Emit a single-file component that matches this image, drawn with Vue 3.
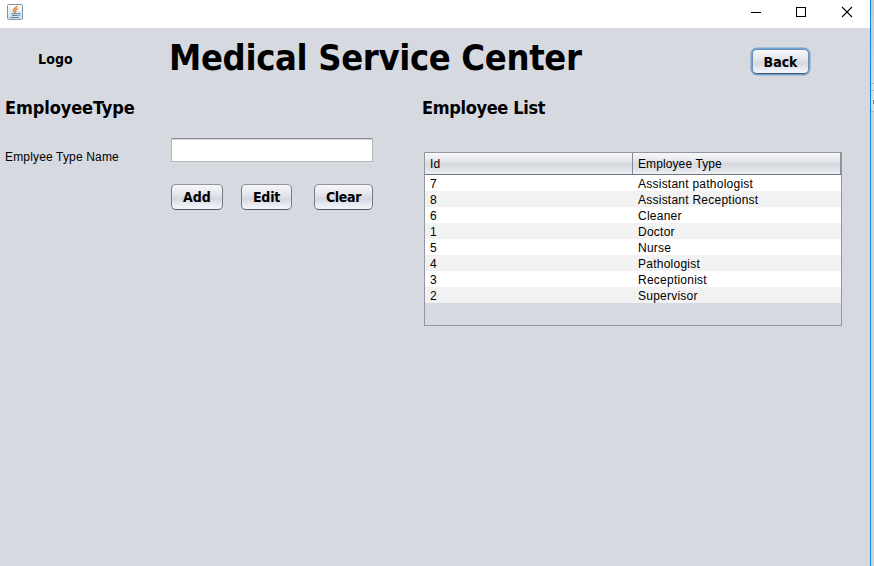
<script setup>
const actions = ['Add', 'Edit', 'Clear']
const rows = [
  [7, 'Assistant pathologist'],
  [8, 'Assistant Receptionst'],
  [6, 'Cleaner'],
  [1, 'Doctor'],
  [5, 'Nurse'],
  [4, 'Pathologist'],
  [3, 'Receptionist'],
  [2, 'Supervisor'],
]
</script>

<template>
  <div class="screen">
    <div class="window">
      <div class="titlebar">
        <svg class="java" width="16" height="16" viewBox="0 0 16 16">
          <defs>
            <linearGradient id="jbg" x1="0" y1="0" x2="0" y2="1">
              <stop offset="0" stop-color="#fdfdfd" />
              <stop offset="1" stop-color="#d3dce3" />
            </linearGradient>
          </defs>
          <rect x="0.5" y="0.5" width="15" height="15" rx="1.2" fill="url(#jbg)" stroke="#7d98ab" />
          <path d="M9.9 1.8C9.8 4 6 4.8 6.3 6.5C6.5 7.3 7.2 7.8 7.6 8.6M10.8 4.6C8.5 5.4 8 6.3 8.8 7.2C9 7.8 8.7 8.2 8.3 8.7" fill="none" stroke="#ea7d22" stroke-width="1.3" />
          <path d="M4.2 9.7H11.2M5.2 11.5H10.4M3.4 13.5H12" fill="none" stroke="#4f7fa3" stroke-width="1.1" />
          <path d="M11.2 9.3C14 8.6 13.8 11 11.2 11.5" fill="none" stroke="#4f7fa3" stroke-width="1" />
        </svg>
        <svg class="controls" width="103" height="12" viewBox="0 0 103 12" fill="none" stroke="#000" shape-rendering="crispEdges">
          <path d="M0 6.5H10" />
          <rect x="45.5" y="1.5" width="9" height="9" />
          <path d="M91 1L101 11M101 1L91 11" stroke-width="1.1" shape-rendering="auto" />
        </svg>
      </div>
      <header class="header">
        <span class="logo">Logo</span>
        <h1>Medical Service Center</h1>
        <button class="btn back">Back</button>
      </header>
      <main class="columns">
        <section class="form">
          <h2 class="h-form">EmployeeType</h2>
          <div class="field">
            <label>Emplyee Type Name</label>
            <input type="text" />
          </div>
          <div class="actions">
            <button v-for="a in actions" :key="a" class="btn" :class="a.toLowerCase()">{{ a }}</button>
          </div>
        </section>
        <section class="list">
          <h2 class="h-list">Employee List</h2>
          <div class="table">
            <div class="row head"><span>Id</span><span>Employee Type</span></div>
            <div v-for="r in rows" :key="r[0]" class="row"><span>{{ r[0] }}</span><span>{{ r[1] }}</span></div>
          </div>
        </section>
      </main>
    </div>
    <div class="behind"><i></i></div>
  </div>
</template>

<style>
body { overflow: hidden; }
</style>

<style scoped>
* { box-sizing: border-box; }
.screen {
  display: flex;
  width: 874px;
  height: 566px;
  color: #000;
  font: 12px/16px "Liberation Sans", Arial, sans-serif;
}
.window {
  width: 871px;
  background: #d6d9e0;
  border-right: 1px solid #0f82e6;
}
.titlebar {
  display: flex;
  justify-content: space-between;
  height: 28px;
  padding: 4px 16px 0 7px;
  background: #fff;
}
.controls { margin-top: 2px; }
.header {
  display: flex;
  align-items: flex-start;
  height: 60px;
  padding-left: 38px;
}
.logo, h1, h2, .btn {
  font-family: "DejaVu Sans Condensed", "DejaVu Sans", Tahoma, sans-serif;
  font-stretch: condensed;
  font-weight: bold;
  white-space: nowrap;
}
.logo { width: 131px; margin-top: 23px; font-size: 14px; letter-spacing: 0.1px; }
h1 { width: 583px; margin: 8px 0 0; font-size: 36px; line-height: 44px; letter-spacing: -0.34px; }
.btn {
  height: 26px;
  padding: 0;
  border: 1px solid;
  border-color: #8f939b #777b83 #51555d;
  border-radius: 5px;
  background: linear-gradient(#f8f8fa 0%, #e2e4e9 42%, #d4d7de 58%, #e9ebf2 82%, #f4f6fc 100%);
  color: #000;
  font-size: 14px;
  line-height: 24px;
}
.back {
  width: 57px;
  height: 25px;
  margin-top: 21px;
  border-color: #6b8fb8 #6b8fb8 #45556b;
  box-shadow: 0 0 0 1.5px #73a4d1;
}
.columns { display: flex; }
.form { width: 422px; padding-left: 5px; }
h2 { margin: 9px 0 0; font-size: 18px; line-height: 22px; letter-spacing: -0.35px; }
.h-form { letter-spacing: -0.1px; }
.field { display: flex; height: 24px; margin-top: 19px; }
label { width: 166px; padding-top: 11px; letter-spacing: 0.16px; }
input {
  width: 202px;
  height: 24px;
  border: 1px solid #b5b6ba;
  border-top-color: #8d8e91;
  background: #fff;
  box-shadow: inset 0 1px 0 #d5d5d8;
  outline: none;
}
.actions { display: flex; padding: 22px 0 0 166px; }
.add { width: 52px; }
.edit { width: 51px; margin-left: 18px; letter-spacing: -0.2px; }
.clear { width: 59px; margin-left: 22px; letter-spacing: -0.35px; }
.table {
  width: 418px;
  height: 174px;
  margin: 33px 0 0 2px;
  border: 1px solid #9297a1;
}
.row { display: grid; grid-template-columns: 208px 208px; height: 16px; background: #fff; line-height: 18px; letter-spacing: 0.24px; }
.row span { padding-left: 5px; white-space: pre; }
.row:nth-child(odd) { background: #f2f2f2; }
.row.head {
  height: 22px;
  border-bottom: 1px solid #70747e;
  background: linear-gradient(#f8f8fa, #e2e4e9 42%, #d6d9df 50%, #e0e3e9 78%, #eff1f6 100%);
  line-height: 22px;
  letter-spacing: 0.1px;
}
.head span { height: 21px; border-right: 1px solid #878b95; }
.behind { width: 3px; background: linear-gradient(#c3cad0 0, #d8d9db 83px, #b3b5b7 83px 84px, #dddddd 84px 90px, #b3b5b7 90px 91px, #dddddd 91px 111px, #b3b5b7 111px 112px, #d3d4d6 112px); }
.behind i { display: block; width: 1px; height: 4px; margin: 100px 0 0 2px; background: #777; }
</style>
